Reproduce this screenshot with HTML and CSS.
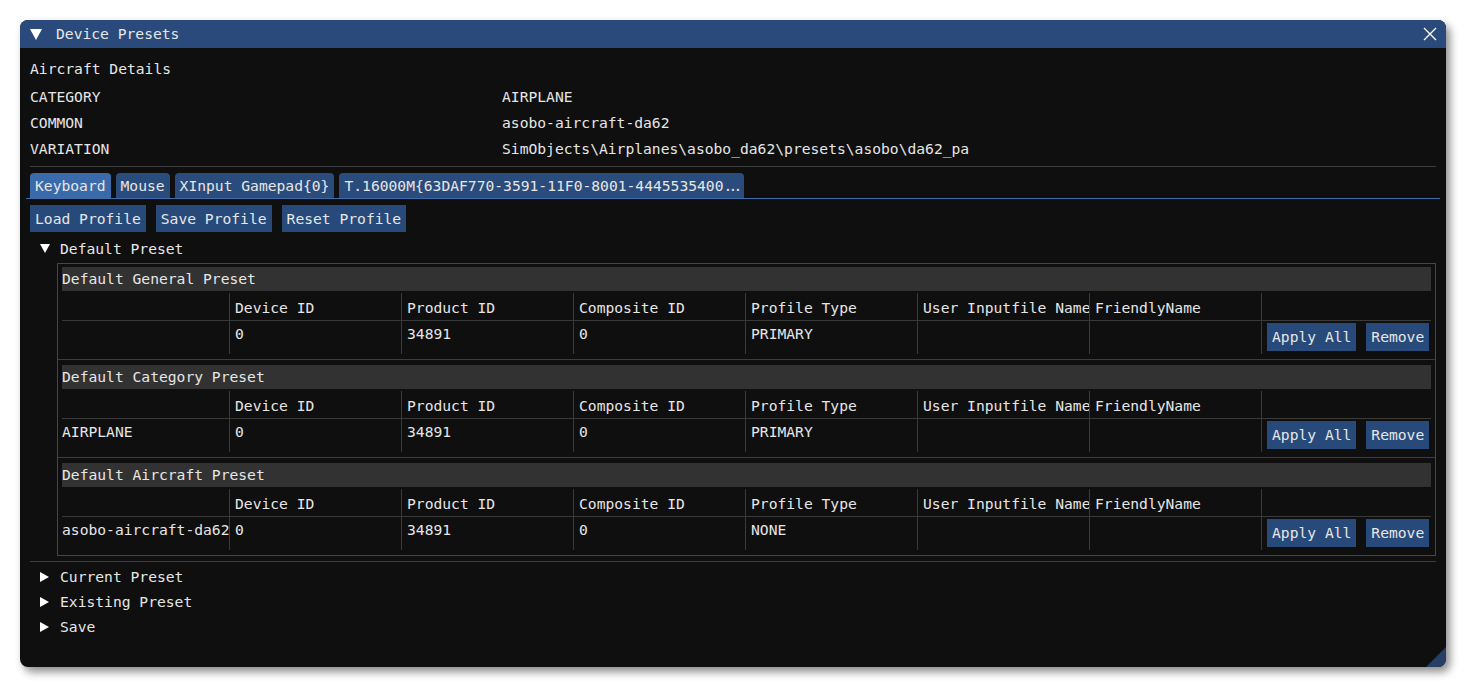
FILE: index.html
```html
<!DOCTYPE html>
<html lang="en">
<head>
  <meta charset="UTF-8" />
  <title>Device Presets</title>
  <link rel="stylesheet" href="styles.css">
</head>
<body>

  <div class="window">
    <div class="titlebar">
      <svg class="title-arrow" width="12" height="11" viewBox="0 0 12 11"><polygon points="0,0 12,0 6,11" fill="#fff"/></svg>
      <span class="title">Device Presets</span>
      <svg class="close" width="14" height="14" viewBox="0 0 14 14"><path d="M1 1 L13 13 M13 1 L1 13" stroke="#fff" stroke-width="1.3"/></svg>
    </div>

    <div class="content">
      <div class="heading">Aircraft Details</div>
      <div class="details">
        <div class="detail"><span class="key">CATEGORY</span><span class="val">AIRPLANE</span></div>
        <div class="detail"><span class="key">COMMON</span><span class="val">asobo-aircraft-da62</span></div>
        <div class="detail"><span class="key">VARIATION</span><span class="val">SimObjects\Airplanes\asobo_da62\presets\asobo\da62_passenger\config</span></div>
      </div>

      <div class="sep"></div>

      <div class="tabs">
        <div class="tab active">Keyboard</div>
        <div class="tab">Mouse</div>
        <div class="tab">XInput Gamepad{0}</div>
        <div class="tab">T.16000M{63DAF770-3591-11F0-8001-4445535400<span class="dots">...</span></div>
      </div>

      <div class="toolbar">
        <button class="btn">Load Profile</button>
        <button class="btn">Save Profile</button>
        <button class="btn">Reset Profile</button>
      </div>

      <div class="node">
        <svg class="arrow" width="10" height="9" viewBox="0 0 10 9"><polygon points="0,0 10,0 5,9" fill="#fff"/></svg>
        <span>Default Preset</span>
      </div>

      <div class="presets">
        <div class="preset">
          <div class="band">Default General Preset</div>
          <div class="grid">
            <div class="th first"></div>
            <div class="th">Device ID</div>
            <div class="th">Product ID</div>
            <div class="th">Composite ID</div>
            <div class="th">Profile Type</div>
            <div class="th">User Inputfile Name</div>
            <div class="th">FriendlyName</div>
            <div class="th"></div>
            <div class="td first"></div>
            <div class="td">0</div>
            <div class="td">34891</div>
            <div class="td">0</div>
            <div class="td">PRIMARY</div>
            <div class="td"></div>
            <div class="td"></div>
            <div class="td actions"><button class="btn">Apply All</button><button class="btn">Remove</button></div>
          </div>
        </div>

        <div class="preset">
          <div class="band">Default Category Preset</div>
          <div class="grid">
            <div class="th first"></div>
            <div class="th">Device ID</div>
            <div class="th">Product ID</div>
            <div class="th">Composite ID</div>
            <div class="th">Profile Type</div>
            <div class="th">User Inputfile Name</div>
            <div class="th">FriendlyName</div>
            <div class="th"></div>
            <div class="td first">AIRPLANE</div>
            <div class="td">0</div>
            <div class="td">34891</div>
            <div class="td">0</div>
            <div class="td">PRIMARY</div>
            <div class="td"></div>
            <div class="td"></div>
            <div class="td actions"><button class="btn">Apply All</button><button class="btn">Remove</button></div>
          </div>
        </div>

        <div class="preset">
          <div class="band">Default Aircraft Preset</div>
          <div class="grid">
            <div class="th first"></div>
            <div class="th">Device ID</div>
            <div class="th">Product ID</div>
            <div class="th">Composite ID</div>
            <div class="th">Profile Type</div>
            <div class="th">User Inputfile Name</div>
            <div class="th">FriendlyName</div>
            <div class="th"></div>
            <div class="td first">asobo-aircraft-da62</div>
            <div class="td">0</div>
            <div class="td">34891</div>
            <div class="td">0</div>
            <div class="td">NONE</div>
            <div class="td"></div>
            <div class="td"></div>
            <div class="td actions"><button class="btn">Apply All</button><button class="btn">Remove</button></div>
          </div>
        </div>
      </div>

      <div class="sep bottom"></div>

      <div class="node closed">
        <svg class="arrow" width="10" height="10" viewBox="0 0 10 10"><polygon points="0,0 9,5 0,10" fill="#fff"/></svg>
        <span>Current Preset</span>
      </div>
      <div class="node closed">
        <svg class="arrow" width="10" height="10" viewBox="0 0 10 10"><polygon points="0,0 9,5 0,10" fill="#fff"/></svg>
        <span>Existing Preset</span>
      </div>
      <div class="node closed">
        <svg class="arrow" width="10" height="10" viewBox="0 0 10 10"><polygon points="0,0 9,5 0,10" fill="#fff"/></svg>
        <span>Save</span>
      </div>
    </div>

    <div class="grip"></div>
  </div>

</body>
</html>
```

FILE: styles.css
```css
body {
  background: #fff;
  margin: 0;
  padding: 20px;
  font-family: "DejaVu Sans Mono", "Liberation Mono", monospace;
  font-size: 14.65px;
  color: #e6e6e6;
}
.window {
  position: relative;
  width: 1426px;
  height: 647px;
  background: #0f0f0f;
  border-radius: 8px;
  overflow: hidden;
  box-shadow: 4px 5px 8px rgba(0, 0, 0, 0.45);
}
.titlebar {
  height: 28px;
  background: #294a7a;
  display: flex;
  align-items: center;
  padding: 0 9px 0 10px;
}
.title-arrow {
  margin-right: 14px;
}
.title {
  flex: 1;
  line-height: 28px;
}
.content {
  padding: 8px 10px 0;
}
.heading {
  height: 26px;
  line-height: 26px;
}
.details {
  margin-top: 2px;
}
.detail {
  display: flex;
  height: 26px;
  line-height: 26px;
}
.key {
  width: 472px;
  flex-shrink: 0;
}
.val {
  width: 467px;
  overflow: hidden;
  white-space: nowrap;
}
.sep {
  height: 1px;
  background: #3f3f3f;
  margin-top: 4px;
}
.tabs {
  display: flex;
  gap: 5px;
  margin: 6px -4px 0;
  padding: 0 4px;
  border-bottom: 1px solid #3b6cac;
}
.tab {
  height: 25px;
  line-height: 25px;
  padding: 0 5px;
  background: #2a4c7c;
  border-radius: 4px 4px 0 0;
  white-space: nowrap;
}
.tab.active {
  background: #3a6aa9;
}
.dots {
  letter-spacing: -3.8px;
}
.toolbar {
  display: flex;
  gap: 10px;
  margin-top: 6px;
}
.btn {
  font: inherit;
  color: #e6e6e6;
  background: #274a7a;
  border: none;
  border-radius: 0;
  padding: 0 5px;
  height: 27px;
  line-height: 27px;
  cursor: pointer;
}
.node {
  display: flex;
  align-items: center;
  gap: 10px;
  height: 24px;
  margin-top: 4px;
  padding-left: 10px;
}
.node.closed {
  height: 25px;
  margin-top: 0;
}
.presets {
  margin: 3px 0 0 27px;
  border: 1px solid #464646;
}
.preset {
  padding: 5px 4px;
  border-bottom: 1px solid #3d3d3d;
}
.preset:first-child {
  padding-top: 3px;
}
.preset:last-child {
  border-bottom: none;
}
.band {
  height: 24px;
  line-height: 24px;
  background: #323232;
}
.grid {
  margin-top: 2px;
  display: grid;
  grid-template-columns: 167px repeat(6, 172px) 1fr;
}
.th {
  height: 28px;
  padding: 3px 0 0 5px;
  line-height: 24px;
  box-sizing: border-box;
  border-left: 1px solid #3a3a3a;
  border-bottom: 1px solid #3a3a3a;
  white-space: nowrap;
}
.td {
  height: 33px;
  padding: 1px 0 0 5px;
  line-height: 24px;
  box-sizing: border-box;
  border-left: 1px solid #3a3a3a;
  white-space: nowrap;
}
.th.first, .td.first {
  border-left: none;
  padding-left: 0;
}
.td.actions {
  display: flex;
  gap: 10px;
  padding-top: 2px;
}
.td.actions .btn {
  height: 28px;
  line-height: 28px;
}
.sep.bottom {
  margin-top: 5px;
}
.sep.bottom + .node {
  margin-top: 2px;
}
.grip {
  position: absolute;
  right: 0;
  bottom: 0;
  width: 0;
  height: 0;
  border-left: 20px solid transparent;
  border-bottom: 20px solid #253f66;
}
```
